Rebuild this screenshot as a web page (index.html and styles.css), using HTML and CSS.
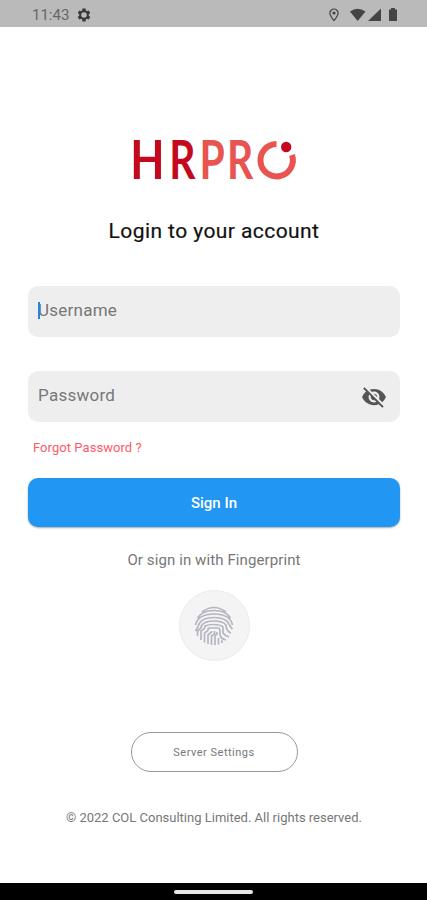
FILE: index.html
```html
<!DOCTYPE html>
<html lang="en">
<head>
<meta charset="utf-8">
<title>HRPRO Login</title>
<link rel="stylesheet" href="styles.css">
</head>
<body>
<div class="screen">
  <header class="status">
    <span class="time">11:43</span>
    <svg class="gear" viewBox="0 0 24 24"><path d="M19.14 12.94c.04-.3.06-.61.06-.94s-.02-.64-.07-.94l2.03-1.58c.18-.14.23-.41.12-.61l-1.92-3.32c-.12-.22-.37-.29-.59-.22l-2.39.96c-.5-.38-1.03-.7-1.62-.94L14.4 2.81c-.04-.24-.24-.41-.48-.41h-3.84c-.24 0-.43.17-.47.41l-.36 2.54c-.59.24-1.13.57-1.62.94l-2.39-.96c-.22-.08-.47 0-.59.22L2.74 8.87c-.12.21-.08.47.12.61l2.03 1.58c-.05.3-.09.63-.09.94s.02.64.07.94l-2.03 1.58c-.18.14-.23.41-.12.61l1.92 3.32c.12.22.37.29.59.22l2.39-.96c.5.38 1.03.7 1.62.94l.36 2.54c.05.24.24.41.48.41h3.84c.24 0 .44-.17.47-.41l.36-2.54c.59-.24 1.13-.56 1.62-.94l2.39.96c.22.08.47 0 .59-.22l1.92-3.32c.12-.22.07-.47-.12-.61zM12 16.2A4.2 4.2 0 1 1 12 7.8a4.2 4.2 0 0 1 0 8.4z"/></svg>
    <svg class="indicators" viewBox="0 0 72 16">
      <path d="M6 2a4.1 4.1 0 0 0-4.1 4.1C1.900 9 6 13.600 6 13.600s4.100-4.600 4.100-7.500A4.100 4.100 0 0 0 6 2z" fill="none" stroke="#444" stroke-width="1.200"/>
      <circle cx="6" cy="6" r="1.600"/>
      <path d="M22 4.500Q29.500-1 37.500 4.500L29.700 14z"/>
      <path d="M53 1.500V14H40z"/>
      <path d="M63 1h4v1.500h2V14h-8V2.500h2z"/>
    </svg>
  </header>
  <main class="content">
    <svg class="logo" viewBox="0 0 166 44" role="img" aria-label="HRPRO">
      <text class="logo-text dark" transform="translate(-1.800 40.500) scale(.84 1)">H</text>
      <text class="logo-text dark" transform="translate(37.200 40.500) scale(.77 1)">R</text>
      <text class="logo-text light" transform="translate(67.400 40.500) scale(.77 1)">P</text>
      <text class="logo-text light" transform="translate(94.900 40.500) scale(.77 1)">R</text>
      <path d="M144.500 6A16.200 16.200 0 1 0 160 17" fill="none" stroke="#e85450" stroke-width="6"/>
      <circle cx="154.200" cy="9" r="5.200" fill="#c4081d"/>
    </svg>
    <h1 class="title"><span>Login to your account</span></h1>
    <div class="field"><span class="caret"></span><span class="user">Username</span></div>
    <div class="field second"><span class="pass">Password</span>
      <svg class="eye" viewBox="0 0 24 24"><path d="M12 7c2.760 0 5 2.240 5 5 0 .65-.13 1.260-.36 1.830l2.920 2.920c1.510-1.260 2.700-2.890 3.430-4.750-1.730-4.390-6-7.500-11-7.500-1.400 0-2.740.25-3.980.7l2.160 2.160C10.740 7.130 11.350 7 12 7zM2 4.270l2.280 2.280.46.46A11.800 11.800 0 0 0 1 12c1.730 4.390 6 7.500 11 7.500 1.550 0 3.030-.3 4.380-.84l.42.42L19.730 22 21 20.730 3.270 3 2 4.270zM7.530 9.800l1.550 1.550c-.05.21-.08.43-.08.65 0 1.660 1.340 3 3 3 .22 0 .44-.03.65-.08l1.550 1.550c-.67.33-1.410.53-2.200.53-2.760 0-5-2.240-5-5 0-.79.2-1.530.53-2.200zm4.310-.78 3.150 3.150.02-.16c0-1.660-1.340-3-3-3l-.17.01z"/></svg>
    </div>
    <a class="forgot">Forgot Password ?</a>
    <button class="signin"><span>Sign In</span></button>
    <p class="or"><span>Or sign in with Fingerprint</span></p>
    <div class="finger">
      <svg viewBox="0 0 40 40">
        <path d="M8 6Q20-3 32 6M3.500 12Q8 4.500 20 4.500T36.500 12M1.500 19Q4 8 20 8T38.500 19M1.500 25Q4 22 5 18Q8 11.500 20 11.500T35 18Q36 21 38.500 23M3.500 30V25Q7 23 8 19Q11 15 20 15T32 19Q32 25 37 27M7 34V25Q11 23 11 20Q14 18.500 20 18.500T29 21V27Q31 30 35 31M10.500 36.500V27Q14.500 25 14.500 22H24Q26 22 26 25V29Q27 33 32 34M14 38V29L17.500 26V25M17.500 39V30L20.500 28V25M21 39V30L23 28V26M24.500 38.500V32M28 37V34"/>
      </svg>
    </div>
    <button class="server"><span>Server Settings</span></button>
    <p class="copy"><span>© 2022 COL Consulting Limited. All rights reserved.</span></p>
  </main>
  <footer class="nav"><i></i></footer>
</div>
</body>
</html>
```
FILE: styles.css
```css
* { box-sizing: border-box; }
body { margin: 0; font-family: Roboto, sans-serif; background: #fff; }
.screen { width: 427px; height: 900px; display: flex; flex-direction: column; }
.status { height: 27px; flex: none; background: #bababa; display: flex; align-items: center; padding: 2px 26px 0 32px; }
.time { font-size: 15px; color: #666; width: 38px; white-space: nowrap; }
.gear { width: 16px; height: 16px; margin-left: 6px; fill: #383838; }
.indicators { width: 72px; height: 16px; margin-left: auto; margin-right: 1px; fill: #444; }
.content { flex: 1; display: flex; flex-direction: column; align-items: center; padding: 111px 27px 0 28px; }
.logo { width: 166px; height: 44px; flex: none; overflow: visible; margin-right: -1px; }
.logo-text { font-family: Lato, sans-serif; font-size: 53px; font-weight: 700; }
.dark { fill: #c4081d; }
.light { fill: #e85450; }
.title { margin: 35px 0 0; height: 28px; line-height: 28px; font-size: 21px; font-weight: 400; letter-spacing: .42px; color: #111; -webkit-text-stroke: .2px #111; white-space: nowrap; }
.field { width: 100%; height: 51px; margin-top: 41px; background: #eee; border-radius: 10px; display: flex; align-items: center; padding: 0 13px 2px 10px; color: #777; font-size: 17px; letter-spacing: .25px; }
.second { margin-top: 34px; }
.caret { width: 2px; height: 17px; background: #2683d8; margin-right: -2px; z-index: 1; }
.user, .pass { margin-top: -1px; }
.eye { width: 26px; height: 26px; margin-left: auto; margin-top: 2px; fill: #555; }
.forgot { align-self: flex-start; margin: 18px 0 0 5px; height: 16px; line-height: 16px; font-size: 13px; letter-spacing: .06px; color: #ff5968; }
.signin { width: 100%; height: 49px; flex: none; margin-top: 22px; border: 0; border-radius: 10px; background: #2196f3; box-shadow: 0 1px 2px #0005; color: #fff; font: 500 15px Roboto, sans-serif; padding-top: 2px; }
.or { margin: 23px 0 0; height: 20px; line-height: 20px; font-size: 15px; letter-spacing: .1px; color: #777; white-space: nowrap; }
.finger { width: 71px; height: 71px; flex: none; margin-top: 20px; border: 1px solid #ebebeb; border-radius: 50%; background: #f4f4f4; display: grid; place-items: center; }
.finger svg { width: 40px; height: 40px; fill: none; stroke: #b4b5c1; stroke-width: 1.700; }
.server { width: 167px; height: 40px; flex: none; margin-top: 71px; border: 1px solid #999; border-radius: 20px; background: #fff; color: #777; font: 11px Roboto, sans-serif; letter-spacing: .5px; }
.copy { margin: 36px 0 0; height: 20px; line-height: 20px; font-size: 13px; color: #777; white-space: nowrap; }
.nav { height: 17px; flex: none; background: #000; display: flex; justify-content: center; padding-top: 7px; }
.nav i { width: 79px; height: 4px; background: #e8e8e8; border-radius: 2px; }
```
